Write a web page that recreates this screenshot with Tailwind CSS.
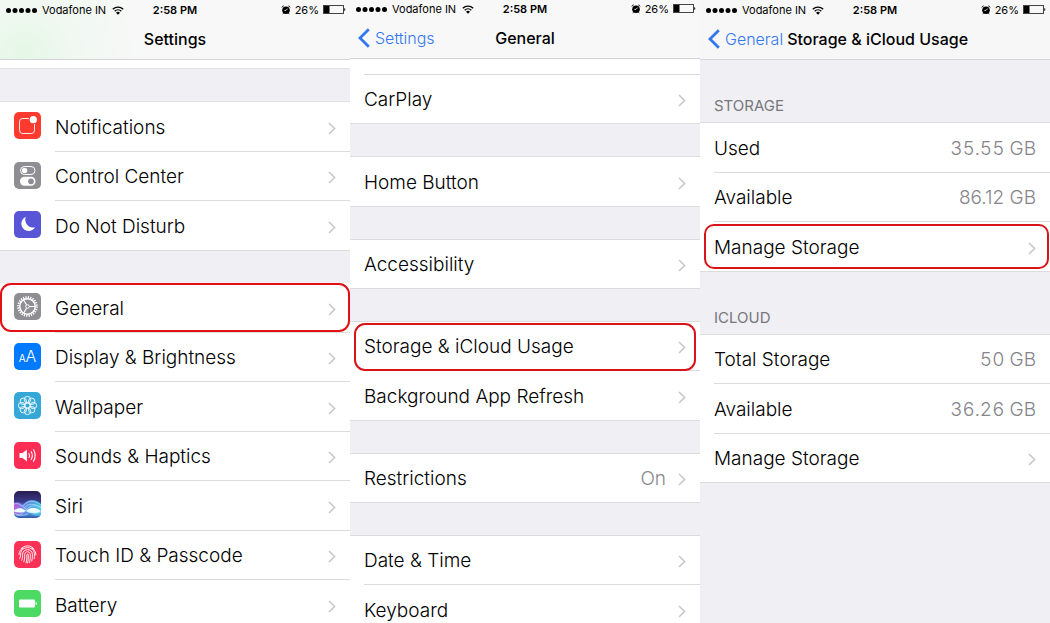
<!DOCTYPE html>
<html lang="en">
<head>
<meta charset="utf-8">
<meta name="viewport" content="width=device-width, initial-scale=1">
<title>Settings – Storage &amp; iCloud Usage</title>
<script src="https://cdn.jsdelivr.net/npm/@tailwindcss/browser@4"></script>
</head>
<body class="bg-[#efeff4] font-['Inter','Liberation_Sans',sans-serif] text-black">

<svg class="hidden" aria-hidden="true">
  <symbol id="wifi" viewBox="0 0 12 9">
    <path d="M.8 3.3a7.4 7.4 0 0 1 10.4 0M2.7 5.2a4.7 4.7 0 0 1 6.6 0" fill="none" stroke="#000" stroke-width="1.3"/>
    <path d="M6 8.8 4 6.7a2.8 2.8 0 0 1 4 0z"/>
  </symbol>
  <symbol id="alarm" viewBox="0 0 10 10">
    <circle cx="5" cy="5.3" r="3.8"/>
    <path d="M.9 2.500A2 2 0 0 1 2.700 .9M9.100 2.500A2 2 0 0 0 7.300 .9" fill="none" stroke="#000" stroke-width=".9"/>
    <path d="M2.600 8.200l-.8 1M7.400 8.200l.8 1" fill="none" stroke="#000" stroke-width=".9"/>
    <path d="M6.600 3.600 5 5.400H3.400" fill="none" stroke="#fff" stroke-width=".8"/>
  </symbol>
  <symbol id="battery" viewBox="0 0 23 10">
    <rect x=".5" y=".5" width="20" height="8" fill="none" stroke="#444" stroke-width="1"/>
    <rect x="1" y="1" width="5.5" height="7"/>
    <path d="M21.300 3c1.400.3 1.400 2.800 0 3.100z"/>
  </symbol>
  <symbol id="chevron" viewBox="0 0 8 13">
    <path d="m1 1 5.6 5.5L1 12" fill="none" stroke="#c7c7cc" stroke-width="1.6"/>
  </symbol>
  <symbol id="back" viewBox="0 0 12 20">
    <path d="M10.8 1.2 2 10l8.800 8.800" fill="none" stroke="#3478f0" stroke-width="2.800"/>
  </symbol>
</svg>

<main class="grid h-screen grid-cols-3 overflow-hidden">

  <!-- Settings -->
  <section class="relative min-w-0 overflow-hidden bg-[#efeff4]">
    <header class="h-[60px] border-b border-[#d4d4d6] bg-[#f8f8f8] bg-[radial-gradient(circle_at_24px_56px,#e4f7e5_0,#f0f8f1_50px,#f8f8f8_120px)]">
      <div class="grid h-5 grid-cols-[1fr_auto_1fr] items-center pr-1.5 pl-1.5 text-[11px]">
        <div class="flex items-center gap-1">
          <svg class="h-[5px] w-8" viewBox="0 0 32 5" aria-hidden="true"><circle cx="2.500" cy="2.500" r="2.500"/><circle cx="9" cy="2.500" r="2.500"/><circle cx="15.500" cy="2.500" r="2.500"/><circle cx="22" cy="2.500" r="2.500"/><circle cx="28.500" cy="2.500" r="2.500"/></svg>
          <span>Vodafone IN</span>
          <svg class="ml-0.5 h-[9px] w-3"><use href="#wifi"/></svg>
        </div>
        <span class="font-semibold">2:58 PM</span>
        <div class="-mr-0.5 flex items-center justify-end gap-1">
          <svg class="size-[10px]"><use href="#alarm"/></svg>
          <span>26%</span>
          <svg class="h-[10px] w-[23px]"><use href="#battery"/></svg>
        </div>
      </div>
      <h1 class="flex h-[38px] items-center justify-center text-[16px] font-medium">Settings</h1>
    </header>
    <div class="h-2 bg-white"></div>
    <div class="h-[34px] border-y border-[#e2e2e6]"></div>
    <nav aria-label="Alerts">
      <a href="#" class="flex h-[50px] items-center gap-3.5 bg-white pl-3.5 text-[19px] font-light">
        <svg class="mb-[3px] size-[27px] shrink-0" viewBox="0 0 27 27"><rect width="27" height="27" rx="5" fill="#ff3b30"/><rect x="5.500" y="6.500" width="15" height="15" rx="3.200" fill="none" stroke="#fff" stroke-width=".9"/><circle cx="19.300" cy="7.700" r="4.600" fill="#ff3b30"/><circle cx="19.300" cy="7.700" r="3.600" fill="#fff"/></svg>
        <span class="flex h-full min-w-0 flex-1 items-center justify-between border-b border-[#dcdcdf] pt-[3px] pr-3.5"><span>Notifications</span><svg class="h-[13px] w-2"><use href="#chevron"/></svg></span>
      </a>
      <a href="#" class="flex h-[49px] items-center gap-3.5 bg-white pl-3.5 text-[19px] font-light">
        <svg class="mb-[3px] size-[27px] shrink-0" viewBox="0 0 27 27"><rect width="27" height="27" rx="5" fill="#8e8e93"/><rect x="6.500" y="4.500" width="14.500" height="8" rx="4" fill="none" stroke="#fff" stroke-width="1"/><circle cx="10.600" cy="8.500" r="2.700" fill="#fff"/><rect x="6" y="14.800" width="15.500" height="9" rx="4.500" fill="#fff"/><circle cx="17" cy="19.300" r="2.900" fill="#8e8e93"/></svg>
        <span class="flex h-full min-w-0 flex-1 items-center justify-between border-b border-[#dcdcdf] pt-[3px] pr-3.5"><span>Control Center</span><svg class="h-[13px] w-2"><use href="#chevron"/></svg></span>
      </a>
      <a href="#" class="flex h-[50px] items-center gap-3.5 border-b border-[#dcdcdf] bg-white pl-3.5 text-[19px] font-light">
        <svg class="mb-[3px] size-[27px] shrink-0" viewBox="0 0 27 27"><rect width="27" height="27" rx="5" fill="#5856d6"/><path d="M11.800 6A7.300 7.300 0 1 0 21 16.300 7.800 7.800 0 0 1 11.800 6z" fill="#fff"/></svg>
        <span class="flex h-full min-w-0 flex-1 items-center justify-between pt-[3px] pr-3.5"><span>Do Not Disturb</span><svg class="h-[13px] w-2"><use href="#chevron"/></svg></span>
      </a>
    </nav>
    <div class="h-8"></div>
    <nav aria-label="Device">
      <a href="#" class="relative flex h-[50px] items-center gap-3.5 bg-white pl-3.5 text-[19px] font-light">
        <svg class="mb-[3px] size-[27px] shrink-0" viewBox="0 0 27 27"><rect width="27" height="27" rx="5" fill="#8e8e93"/><g fill="none" stroke="#fff"><circle cx="13.500" cy="13.500" r="9.300" stroke-width="2" stroke-dasharray="1.300 1.134"/><circle cx="13.500" cy="13.500" r="7.700" stroke-width="1.500"/><circle cx="13.500" cy="13.500" r="1.800" stroke-width="1"/><path d="M15.500 13.500h5.500M12.500 11.800 9.700 7M12.500 15.200 9.700 20" stroke-width="1.200"/></g></svg>
        <span class="flex h-full min-w-0 flex-1 items-center justify-between border-b border-[#dcdcdf] pt-[3px] pr-3.5"><span>General</span><svg class="h-[13px] w-2"><use href="#chevron"/></svg></span>
        <span class="absolute inset-x-0 top-0 h-[49px] rounded-[11px] border-2 border-[#e01014]"></span>
      </a>
      <a href="#" class="flex h-[49px] items-center gap-3.5 bg-white pl-3.5 text-[19px] font-light">
        <span class="mb-[3px] flex size-[27px] shrink-0 items-baseline justify-center rounded-[5px] bg-[#007aff] text-white" aria-hidden="true"><span class="text-[10px] leading-[27px] font-normal">A</span><span class="text-[16px] leading-[27px]">A</span></span>
        <span class="flex h-full min-w-0 flex-1 items-center justify-between border-b border-[#dcdcdf] pt-[3px] pr-3.5"><span>Display &amp; Brightness</span><svg class="h-[13px] w-2"><use href="#chevron"/></svg></span>
      </a>
      <a href="#" class="flex h-[50px] items-center gap-3.5 bg-white pl-3.5 text-[19px] font-light">
        <svg class="mb-[3px] size-[27px] shrink-0" viewBox="0 0 27 27"><rect width="27" height="27" rx="5" fill="#36a8d8"/><g fill="none" stroke="#fff" stroke-width=".9"><circle cx="13.500" cy="7.600" r="3.200"/><circle cx="17.700" cy="9.300" r="3.200"/><circle cx="19.400" cy="13.500" r="3.200"/><circle cx="17.700" cy="17.700" r="3.200"/><circle cx="13.500" cy="19.400" r="3.200"/><circle cx="9.300" cy="17.700" r="3.200"/><circle cx="7.600" cy="13.500" r="3.200"/><circle cx="9.300" cy="9.300" r="3.200"/><circle cx="13.500" cy="13.500" r="2.600"/></g></svg>
        <span class="flex h-full min-w-0 flex-1 items-center justify-between border-b border-[#dcdcdf] pt-[3px] pr-3.5"><span>Wallpaper</span><svg class="h-[13px] w-2"><use href="#chevron"/></svg></span>
      </a>
      <a href="#" class="flex h-[49px] items-center gap-3.5 bg-white pl-3.5 text-[19px] font-light">
        <svg class="mb-[3px] size-[27px] shrink-0" viewBox="0 0 27 27"><rect width="27" height="27" rx="5" fill="#ff2d55"/><path d="M5.500 11h3l4.500-3.500v12L8.500 16h-3z" fill="#fff"/><path d="M14.800 11.200q1.300 2.300 0 4.600M17 9.200q2.600 4.300 0 8.600M19.300 7.300q3.900 6.200 0 12.400" fill="none" stroke="#fff" stroke-width="1.100"/></svg>
        <span class="flex h-full min-w-0 flex-1 items-center justify-between border-b border-[#dcdcdf] pt-[3px] pr-3.5"><span>Sounds &amp; Haptics</span><svg class="h-[13px] w-2"><use href="#chevron"/></svg></span>
      </a>
      <a href="#" class="flex h-[50px] items-center gap-3.5 bg-white pl-3.5 text-[19px] font-light">
        <svg class="mb-[3px] size-[27px] shrink-0" viewBox="0 0 27 27">
          <defs><linearGradient id="siri-sky" x1="0" y1="0" x2="0" y2="1"><stop offset="0" stop-color="#281c4e"/><stop offset=".4" stop-color="#3a3a8c"/><stop offset=".7" stop-color="#6cb8ec"/><stop offset="1" stop-color="#3159ab"/></linearGradient><linearGradient id="siri-wave" x1="0" x2="1"><stop offset="0" stop-color="#d653dc"/><stop offset=".4" stop-color="#6f8cf0"/><stop offset="1" stop-color="#3fd0e8"/></linearGradient><clipPath id="siri-clip"><rect width="27" height="27" rx="5"/></clipPath></defs>
          <g clip-path="url(#siri-clip)"><rect width="27" height="27" fill="url(#siri-sky)"/><path d="M0 12c4-2 7 0 9 2 4-6 12-7 18-1v11c-4 2-8 1-12-2-5 4-10 3-15 0z" fill="url(#siri-wave)" opacity=".8"/><path d="M0 19.500c4-3 8-3 12 .5 4-4 10-4 15 0-5 3.500-11 2.500-15 0-4 2-8 2-12 .5z" fill="#effcff"/><path d="M0 13c5-2 9 3 13 6s9 4 14 2M9 15c4-6 12-6 18-1M10 17c4-5 11-5 17 0M2 24c5 2 8-4 12-7s8-3 13-1M0 22c6 3 10 3 14 1" fill="none" stroke="#b5f0ff" stroke-width=".6"/></g>
        </svg>
        <span class="flex h-full min-w-0 flex-1 items-center justify-between border-b border-[#dcdcdf] pt-[3px] pr-3.5"><span>Siri</span><svg class="h-[13px] w-2"><use href="#chevron"/></svg></span>
      </a>
      <a href="#" class="flex h-[49px] items-center gap-3.5 bg-white pl-3.5 text-[19px] font-light">
        <svg class="mb-[3px] size-[27px] shrink-0" viewBox="0 0 27 27"><rect width="27" height="27" rx="5" fill="#fc3158"/><g fill="none" stroke="#fff" stroke-width=".9" stroke-linecap="round"><path d="M7 7.800c3.500-4 9.500-4 13 0M5 13.500c0-3 1.700-5.200 4-6.300M22 14c0-3-1.700-5.500-4-6.800M5.700 17.500c1-2 .8-3 .9-4.500.4-8.500 13.400-8.500 13.800 0 .1 2 .1 3.300-.2 4.800M7.800 19.300c1-2.300.7-4 .8-6.100.3-6 9.500-6 9.800 0 .1 2.500 0 4.500-.6 6.800M9.800 20.800c1.200-2.800.7-5 .9-7.400.3-3.500 5.300-3.500 5.600 0 .1 3 0 5.500-.9 8.200M12 21.800c1-2.500.8-5 .8-8 .1-1 1.400-1 1.500 0 .1 3 0 5.500-.7 8.200"/></g></svg>
        <span class="flex h-full min-w-0 flex-1 items-center justify-between border-b border-[#dcdcdf] pt-[3px] pr-3.5"><span>Touch ID &amp; Passcode</span><svg class="h-[13px] w-2"><use href="#chevron"/></svg></span>
      </a>
      <a href="#" class="flex h-[50px] items-center gap-3.5 bg-white pl-3.5 text-[19px] font-light">
        <svg class="mb-[3px] size-[27px] shrink-0" viewBox="0 0 27 27"><rect width="27" height="27" rx="5" fill="#4cd964"/><rect x="5" y="9.500" width="16" height="8" rx="1" fill="#fff"/><path d="M21.700 11.800c1.700.3 1.700 3.100 0 3.400z" fill="#fff"/></svg>
        <span class="flex h-full min-w-0 flex-1 items-center justify-between border-b border-[#dcdcdf] pt-[3px] pr-3.5"><span>Battery</span><svg class="h-[13px] w-2"><use href="#chevron"/></svg></span>
      </a>
    </nav>
  </section>

  <!-- General -->
  <section class="relative min-w-0 overflow-hidden bg-[#efeff4]">
    <header class="h-[59px] border-b border-[#d4d4d6] bg-[#f8f8f8]">
      <div class="grid h-[18px] grid-cols-[1fr_auto_1fr] items-center pr-1.5 pl-1.5 text-[11px]">
        <div class="flex items-center gap-1">
          <svg class="h-[5px] w-8" viewBox="0 0 32 5" aria-hidden="true"><circle cx="2.500" cy="2.500" r="2.500"/><circle cx="9" cy="2.500" r="2.500"/><circle cx="15.500" cy="2.500" r="2.500"/><circle cx="22" cy="2.500" r="2.500"/><circle cx="28.500" cy="2.500" r="2.500"/></svg>
          <span>Vodafone IN</span>
          <svg class="ml-0.5 h-[9px] w-3"><use href="#wifi"/></svg>
        </div>
        <span class="font-semibold">2:58 PM</span>
        <div class="-mr-0.5 flex items-center justify-end gap-1">
          <svg class="size-[10px]"><use href="#alarm"/></svg>
          <span>26%</span>
          <svg class="h-[10px] w-[23px]"><use href="#battery"/></svg>
        </div>
      </div>
      <div class="grid h-10 grid-cols-[1fr_auto_1fr] items-center px-2 text-[16px]">
        <a href="#" class="flex items-center gap-[5px] font-light text-[#3478f0]"><svg class="h-5 w-3"><use href="#back"/></svg>Settings</a>
        <h2 class="font-medium">General</h2>
      </div>
    </header>
    <div class="h-4 bg-white pl-3.5"><div class="h-full border-b border-[#dcdcdf]"></div></div>
    <a href="#" class="flex h-[49px] items-center justify-between border-b border-[#dcdcdf] bg-white px-3.5 pt-[3px] text-[19px] font-light"><span>CarPlay</span><svg class="h-[13px] w-2"><use href="#chevron"/></svg></a>
    <div class="h-[33px] border-b border-[#dcdcdf]"></div>
    <a href="#" class="flex h-[50px] items-center justify-between border-b border-[#dcdcdf] bg-white px-3.5 pt-[3px] text-[19px] font-light"><span>Home Button</span><svg class="h-[13px] w-2"><use href="#chevron"/></svg></a>
    <div class="h-[33px] border-b border-[#dcdcdf]"></div>
    <a href="#" class="flex h-[49px] items-center justify-between border-b border-[#dcdcdf] bg-white px-3.5 pt-[3px] text-[19px] font-light"><span>Accessibility</span><svg class="h-[13px] w-2"><use href="#chevron"/></svg></a>
    <div class="h-[33px] border-b border-[#dcdcdf]"></div>
    <a href="#" class="relative block h-[49px] bg-white pl-3.5 text-[19px] font-light">
      <span class="flex h-full items-center justify-between border-b border-[#dcdcdf] pt-[3px] pr-3.5"><span>Storage &amp; iCloud Usage</span><svg class="h-[13px] w-2"><use href="#chevron"/></svg></span>
      <span class="absolute inset-x-1 top-px h-12 rounded-[11px] border-2 border-[#d81418]"></span>
    </a>
    <a href="#" class="flex h-[50px] items-center justify-between border-b border-[#dcdcdf] bg-white px-3.5 pt-[3px] text-[19px] font-light"><span>Background App Refresh</span><svg class="h-[13px] w-2"><use href="#chevron"/></svg></a>
    <div class="h-[33px] border-b border-[#dcdcdf]"></div>
    <a href="#" class="flex h-[49px] items-center border-b border-[#dcdcdf] bg-white px-3.5 pt-[3px] text-[19px] font-light"><span class="flex-1">Restrictions</span><span class="mr-3 text-[#85858a]">On</span><svg class="h-[13px] w-2"><use href="#chevron"/></svg></a>
    <div class="h-[33px] border-b border-[#dcdcdf]"></div>
    <a href="#" class="block h-[49px] bg-white pl-3.5 text-[19px] font-light"><span class="flex h-full items-center justify-between border-b border-[#dcdcdf] pt-[3px] pr-3.5"><span>Date &amp; Time</span><svg class="h-[13px] w-2"><use href="#chevron"/></svg></span></a>
    <a href="#" class="flex h-[49px] items-center justify-between bg-white px-3.5 pt-[3px] text-[19px] font-light"><span>Keyboard</span><svg class="h-[13px] w-2"><use href="#chevron"/></svg></a>
  </section>

  <!-- Storage & iCloud Usage -->
  <section class="relative min-w-0 overflow-hidden bg-[#efeff4]">
    <header class="h-[60px] border-b border-[#d4d4d6] bg-[#f7f7f8]">
      <div class="grid h-5 grid-cols-[1fr_auto_1fr] items-center pr-1.5 pl-1.5 text-[11px]">
        <div class="flex items-center gap-1">
          <svg class="h-[5px] w-8" viewBox="0 0 32 5" aria-hidden="true"><circle cx="2.500" cy="2.500" r="2.500"/><circle cx="9" cy="2.500" r="2.500"/><circle cx="15.500" cy="2.500" r="2.500"/><circle cx="22" cy="2.500" r="2.500"/><circle cx="28.500" cy="2.500" r="2.500"/></svg>
          <span>Vodafone IN</span>
          <svg class="ml-0.5 h-[9px] w-3"><use href="#wifi"/></svg>
        </div>
        <span class="font-semibold">2:58 PM</span>
        <div class="-mr-0.5 flex items-center justify-end gap-1">
          <svg class="size-[10px]"><use href="#alarm"/></svg>
          <span>26%</span>
          <svg class="h-[10px] w-[23px]"><use href="#battery"/></svg>
        </div>
      </div>
      <div class="flex h-[38px] items-center gap-1 px-2 text-[16px] whitespace-nowrap">
        <a href="#" class="flex items-center gap-[5px] font-light text-[#3478f0]"><svg class="h-5 w-3"><use href="#back"/></svg>General</a>
        <h2 class="font-medium">Storage &amp; iCloud Usage</h2>
      </div>
    </header>
    <h3 class="flex h-[63px] items-end border-b border-[#dcdcdf] px-3.5 pb-[5px] text-[15px] text-[#77777c]">STORAGE</h3>
    <div class="h-[50px] bg-white pl-3.5 text-[19px] font-light"><div class="flex h-full items-center justify-between border-b border-[#dcdcdf] pt-[3px] pr-3.5"><span>Used</span><span class="text-[#85858a] tabular-nums">35.55 GB</span></div></div>
    <div class="h-[49px] bg-white pl-3.5 text-[19px] font-light"><div class="flex h-full items-center justify-between border-b border-[#dcdcdf] pt-[3px] pr-3.5"><span>Available</span><span class="text-[#85858a]">86.12 GB</span></div></div>
    <a href="#" class="relative flex h-[50px] items-center justify-between border-b border-[#dcdcdf] bg-white px-3.5 pt-[3px] text-[19px] font-light"><span>Manage Storage</span><svg class="h-[13px] w-2"><use href="#chevron"/></svg>
      <span class="absolute top-0.5 right-px left-1 h-[45px] rounded-[10px] border-2 border-[#d81418]"></span>
    </a>
    <h3 class="flex h-[63px] items-end border-b border-[#dcdcdf] px-3.5 pb-[5px] text-[15px] text-[#77777c]">ICLOUD</h3>
    <div class="h-[49px] bg-white pl-3.5 text-[19px] font-light"><div class="flex h-full items-center justify-between border-b border-[#dcdcdf] pt-[3px] pr-3.5"><span>Total Storage</span><span class="text-[#85858a] tabular-nums">50 GB</span></div></div>
    <div class="h-[50px] bg-white pl-3.5 text-[19px] font-light"><div class="flex h-full items-center justify-between border-b border-[#dcdcdf] pt-[3px] pr-3.5"><span>Available</span><span class="text-[#85858a] tabular-nums">36.26 GB</span></div></div>
    <a href="#" class="flex h-[49px] items-center justify-between border-b border-[#dcdcdf] bg-white px-3.5 pt-[3px] text-[19px] font-light"><span>Manage Storage</span><svg class="h-[13px] w-2"><use href="#chevron"/></svg></a>
  </section>
</main>
</body>
</html>
